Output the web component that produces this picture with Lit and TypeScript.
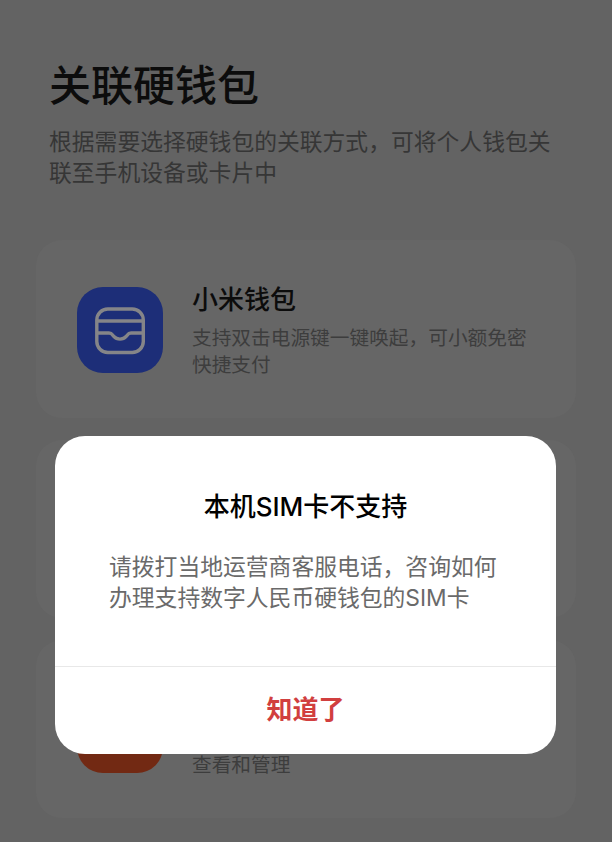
import { css, html, LitElement } from "lit";
import { customElement } from "lit/decorators.js";

const walletIcon = html`<svg class="glyph" viewBox="0 0 86 86" fill="none" stroke="#858588" stroke-width="3.4">
	<rect x="19.8" y="22" width="46.5" height="43.5" rx="11"></rect>
	<path d="M19.8 34H66.3"></path>
	<path d="M19.8 46H32C35 46 35.2 47.6 36.8 49.4C40 53 46 53 49.2 49.4C50.8 47.6 51 46 54 46H66.3"></path>
</svg>`;

@customElement("app-root")
export class AppRoot extends LitElement {
	static styles = css`
		:host {
			display: block;
			position: relative;
			width: 612px;
			height: 842px;
			overflow: hidden;
			background: #636363;
			font-family: "Noto Sans CJK SC", "Noto Sans", sans-serif;
		}

		.page {
			padding: 55px 36px 0;
		}

		h1 {
			margin: 0 0 0 13px;
			font-size: 42px;
			line-height: 56px;
			font-weight: 500;
			color: #0c0c0c;
		}

		.intro {
			margin: 14px 0 0 13px;
			width: 506px;
			font-size: 22.8px;
			line-height: 31px;
			color: #363636;
		}

		.cards {
			display: flex;
			flex-direction: column;
			gap: 22px;
			margin-top: 53px;
		}

		.card {
			display: flex;
			gap: 29px;
			box-sizing: border-box;
			height: 178px;
			padding: 47px 41px 0;
			border-radius: 26px;
			background: #666666;
		}

		.icon {
			flex: none;
			width: 86px;
			height: 86px;
			border-radius: 26px;
		}

		.blue {
			background: #1d2e78;
		}

		.red {
			background: #722913;
		}

		.glyph {
			display: block;
			width: 86px;
			height: 86px;
		}

		.name {
			margin-top: -7px;
			font-size: 26px;
			line-height: 36px;
			font-weight: 500;
			color: #0c0c0c;
		}

		.desc {
			margin-top: 7px;
			font-size: 19.7px;
			line-height: 27px;
			white-space: nowrap;
			color: #3d3d3d;
		}

		.scrim {
			position: absolute;
			inset: 0;
			padding: 436px 56px 0 55px;
		}

		.dialog {
			height: 318px;
			border-radius: 30px;
			background: #ffffff;
			display: flex;
			flex-direction: column;
		}

		.dialog-title {
			margin: 53px 0 0;
			font-family: Inter, "Noto Sans CJK SC", sans-serif;
			font-size: 26px;
			line-height: 36px;
			font-weight: 500;
			text-align: center;
			color: #000000;
		}

		.dialog-body {
			margin: 26px 54px 0;
			font-family: Inter, "Noto Sans CJK SC", sans-serif;
			font-size: 22.8px;
			line-height: 31px;
			color: #6a6a6a;
			flex: 1;
		}

		.dialog-action {
			height: 88px;
			border: 0;
			border-top: 1px solid #e8e8e8;
			background: none;
			padding: 0 0 7px;
			font: inherit;
			font-size: 26px;
			font-weight: 700;
			color: #d13f3f;
		}
	`;

	render() {
		return html`
			<div class="page">
				<h1>关联硬钱包</h1>
				<p class="intro">根据需要选择硬钱包的关联方式，可将个人钱包关联至手机设备或卡片中</p>
				<div class="cards">
					<div class="card">
						<div class="icon blue">${walletIcon}</div>
						<div>
							<div class="name">小米钱包</div>
							<div class="desc">支持双击电源键一键唤起，可小额免密<br />快捷支付</div>
						</div>
					</div>
					<div class="card"></div>
					<div class="card">
						<div class="icon red"></div>
						<div>
							<div class="name">&nbsp;</div>
							<div class="desc">&nbsp;<br />查看和管理</div>
						</div>
					</div>
				</div>
			</div>
			<div class="scrim">
				<div class="dialog">
					<h2 class="dialog-title">本机SIM卡不支持</h2>
					<p class="dialog-body">请拨打当地运营商客服电话，咨询如何办理支持数字人民币硬钱包的SIM卡</p>
					<button class="dialog-action">知道了</button>
				</div>
			</div>
		`;
	}
}
